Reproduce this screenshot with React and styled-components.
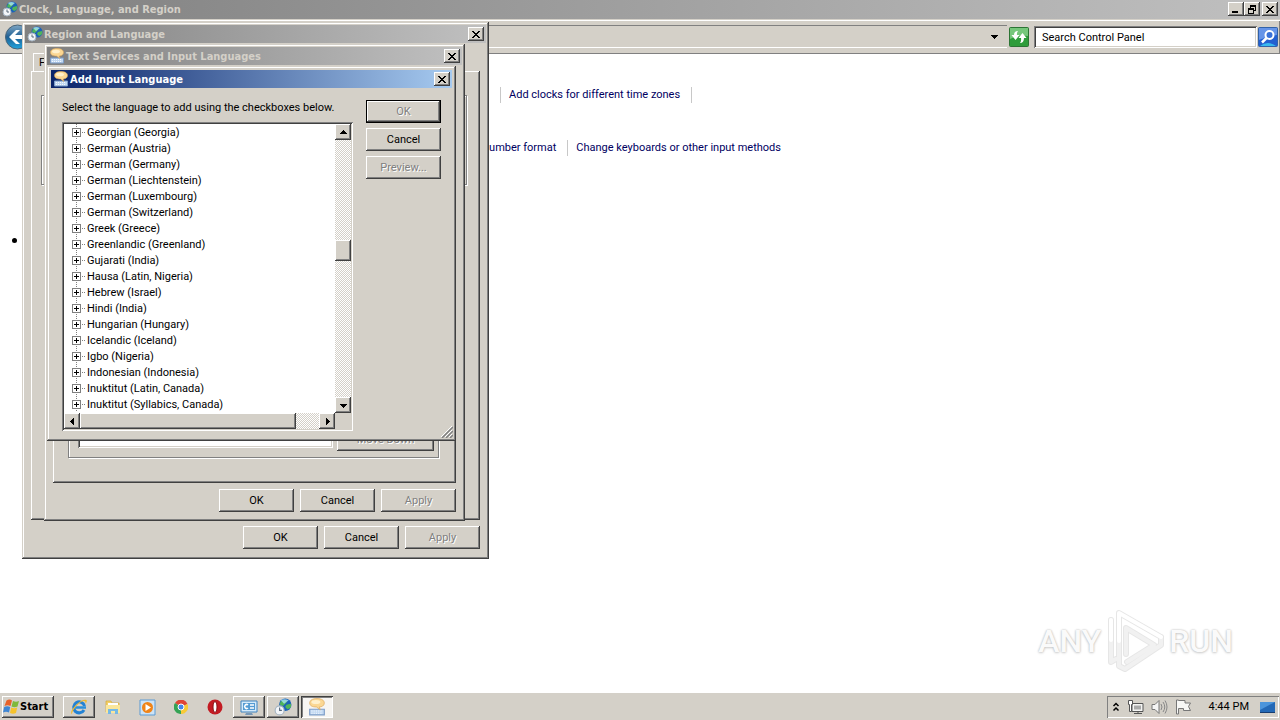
import React from "react";
import styled, { createGlobalStyle, css } from "styled-components";

const face = "#d4d0c8";
const raised = css`
  background: ${face};
  box-shadow: inset -1px -1px #404040, inset 1px 1px #fff, inset -2px -2px #808080;
`;
const sunken = css`
  box-shadow: inset 1px 1px #808080, inset -1px -1px #fff, inset 2px 2px #404040, inset -2px -2px ${face};
`;
const titleFont = css`
  font: 700 11px/18px "DejaVu Sans Condensed", "DejaVu Sans", sans-serif;
`;

const GlobalStyle = createGlobalStyle`
  * { box-sizing: border-box; }
  body { margin: 0; background: #fff; color: #000; font: 11px/16px Roboto, "Liberation Sans", sans-serif; }
  button, input { font: inherit; color: inherit; border: 0; border-radius: 0; padding: 0; margin: 0; }
  svg { display: block; flex: none; }
`;

const Desktop = styled.div`
  position: relative;
  display: flex;
  flex-direction: column;
  min-height: 100vh;
  overflow: hidden;
`;

/* Explorer window */
const MainTitle = styled.header`
  display: flex;
  align-items: center;
  height: 19px;
  padding: 0 2px 1px;
  color: ${face};
  background: linear-gradient(90deg, #808080, #c0c0c0);
  ${titleFont}
`;
const TitleText = styled.span`
  flex: 1;
  padding: 2px 0 0 1px;
  white-space: nowrap;
`;
const CaptionButton = styled.button`
  ${raised}
  display: grid;
  place-items: center;
  width: 16px;
  height: 14px;
  color: #000;
  margin-left: ${(p) => (p.$apart ? "2px" : "0")};
`;
const Toolbar = styled.div`
  display: flex;
  align-items: center;
  height: 35px;
  padding: 0 2px 0 3px;
  background: ${face};
  border-top: 1px solid ${face};
  border-bottom: 1px solid #808080;
  box-shadow: inset 0 1px #fff, inset -1px 0 #808080;
`;
const BackButton = styled.button`
  display: grid;
  place-items: center;
  background: none;
  width: 27px;
  height: 27px;
`;
const Address = styled.div`
  display: flex;
  flex: 1;
  align-items: center;
  justify-content: flex-end;
  height: 23px;
  margin: 0 2px 0 30px;
  border-top: 1px solid #808080;
  border-bottom: 1px solid #fff;
`;
const DropButton = styled.button`
  display: grid;
  place-items: center;
  width: 26px;
  height: 20px;
  background: none;
`;
const SquareButton = styled.button`
  display: grid;
  place-items: center;
  width: 20px;
  height: 20px;
  background: none;
`;
const SearchBox = styled.input`
  ${sunken}
  width: 223px;
  height: 22px;
  margin: 0 1px 0 5px;
  padding: 2px 8px 0;
  background: #fff;
  &::placeholder { color: #000; opacity: 1; }
`;
const Page = styled.main`
  display: flex;
  flex: 1;
  flex-direction: column;
  gap: 37px;
  padding-top: 33px;
`;
const LinkRow = styled.nav`
  display: flex;
  padding-left: ${(p) => p.$indent}px;
  white-space: nowrap;
`;
const PageLink = styled.a`
  padding: 0 11px 0 8px;
  color: #00005f;
  text-decoration: none;
  line-height: 16px;
  border-left: ${(p) => (p.$ruled ? "1px solid #c8c8c8" : "0")};
  border-right: ${(p) => (p.$last ? "0" : "1px solid #c8c8c8")};
`;
const Bullets = styled.ul`
  margin: 0;
  padding: 45px 0 0 12px;
  list-style: none;
`;
const Bullet = styled.li`
  width: 5px;
  height: 5px;
  border-radius: 3px;
  background: #000;
`;

/* Dialogs */
const Dialog = styled.section`
  position: absolute;
  background: ${face};
  box-shadow: inset -1px -1px #404040, inset 1px 1px ${face}, inset -2px -2px #808080, inset 2px 2px #fff;
`;
const RegionDialog = styled(Dialog)`
  left: 22px;
  top: 22px;
  width: 467px;
  padding: 3px 3px 10px;
`;
const ServicesDialog = styled(Dialog)`
  left: 44px;
  top: 44px;
  width: 421px;
  padding: 3px 3px 9px;
`;
const AddDialog = styled(Dialog)`
  left: 47px;
  top: 66px;
  width: 409px;
  padding: 4px 4px 0;
`;
const TitleBar = styled.header`
  display: flex;
  align-items: center;
  height: 18px;
  padding: 0 2px;
  color: ${(p) => (p.$active ? "#fff" : face)};
  background: ${(p) =>
    p.$active ? "linear-gradient(90deg, #0a246a, #a6caf0)" : "linear-gradient(90deg, #808080, #c0c0c0)"};
  ${titleFont}
`;
const DialogBody = styled.div`
  padding: 10px 6px 0;
`;
const Tab = styled.button`
  display: block;
  width: 56px;
  height: 18px;
  margin-left: 2px;
  padding-left: 5px;
  text-align: left;
  background: ${face};
  border-left: 1px solid #fff;
  border-top: 1px solid #fff;
`;
const TabPanel = styled.div`
  display: flex;
  flex-direction: column;
  ${raised}
`;
const RegionPanel = styled(TabPanel)`
  height: 449px;
  padding: 24px 13px 0 10px;
`;
const ServicesPanel = styled(TabPanel)`
  height: 408px;
  padding: 15px 17px 25px 15px;
`;
const GroupBox = styled.div`
  display: flex;
  align-items: flex-end;
  justify-content: space-between;
  height: ${(p) => (p.$short ? "90px" : "auto")};
  flex: ${(p) => (p.$short ? "none" : "1")};
  padding: 0 4px 6px 9px;
  border: 1px solid #808080;
  box-shadow: 1px 1px #fff, inset 1px 1px #fff;
`;
const ServiceList = styled.div`
  ${sunken}
  width: 255px;
  height: 180px;
  margin-bottom: 3px;
  background: #fff;
`;
const Actions = styled.footer`
  display: flex;
  justify-content: flex-end;
  gap: 6px;
  padding-top: 6px;
`;
const PushButton = styled.button`
  ${raised}
  width: ${(p) => (p.$wide ? "97px" : "75px")};
  height: 23px;
  line-height: 16px;
  ${(p) => p.$primary && css`
    box-shadow: inset 0 0 0 1px #000, inset -2px -2px #404040, inset 2px 2px #fff, inset -3px -3px #808080;
  `}
  &:disabled { color: #808080; text-shadow: 1px 1px #fff; }
`;
const AddBody = styled.div`
  display: flex;
  justify-content: space-between;
  padding: 12px 11px 10px 11px;
`;
const Prompt = styled.p`
  margin: 0 0 6px;
  line-height: 16px;
  white-space: nowrap;
`;
const ButtonColumn = styled.div`
  display: flex;
  flex-direction: column;
  gap: 5px;
`;
const ListFrame = styled.div`
  ${sunken}
  display: grid;
  grid-template: 289px 16px / 271px 16px;
  width: 291px;
  padding: 2px;
`;
const Tree = styled.ul`
  margin: 0;
  padding: 0 0 0 8px;
  list-style: none;
  overflow: hidden;
  background: #fff;
`;
const TreeItem = styled.li`
  display: flex;
  align-items: center;
  height: 16px;
  white-space: nowrap;
  background: repeating-linear-gradient(#808080 0 1px, #fff 1px 2px) 4px 0 / 1px 16px no-repeat;
`;
const TreeLabel = styled.span`
  padding-top: 2px;
`;
const Expander = styled.button`
  display: grid;
  place-items: center;
  width: 9px;
  height: 9px;
  border: 1px solid #808080;
  background: #fff;
`;
const Branch = styled.span`
  width: 5px;
  height: 1px;
  margin-right: 1px;
  background: repeating-linear-gradient(90deg, #fff 0 1px, #808080 1px 2px);
`;
const ScrollBar = styled.div`
  display: flex;
  flex-direction: ${(p) => (p.$vertical ? "column" : "row")};
  background: repeating-conic-gradient(#fff 0 25%, ${face} 0 50%) 0 0 / 2px 2px;
`;
const ScrollButton = styled.button`
  ${raised}
  display: grid;
  place-items: center;
  width: 16px;
  height: 16px;
`;
const Thumb = styled.div`
  ${raised}
  ${(p) => (p.$vertical ? "height: 21px; margin: 100px 0 auto;" : "width: 216px; margin-right: auto;")}
`;
const Corner = styled.div`
  background: ${face};
`;
const Grip = styled.span`
  position: absolute;
  right: 3px;
  bottom: 3px;
`;

/* Watermark */
const Watermark = styled.div`
  position: absolute;
  right: 47px;
  bottom: 47px;
  display: flex;
  align-items: center;
  gap: 4px;
  color: #fafafa;
  font: 500 32px/40px Roboto, sans-serif;
  text-shadow: 0 0 2px #b4b4b4, 0 1px 3px #d8d8d8;
`;

/* Taskbar */
const Taskbar = styled.footer`
  display: flex;
  align-items: center;
  gap: 2px;
  height: 28px;
  padding: 1px 1px 0 2px;
  background: ${face};
  border-top: 1px solid #fff;
`;
const StartButton = styled.button`
  ${raised}
  display: flex;
  align-items: center;
  width: 52px;
  height: 22px;
  margin-right: 7px;
  padding-left: 1px;
  ${titleFont}
`;
const TaskButton = styled.button`
  display: grid;
  place-items: center;
  width: 32px;
  height: 22px;
  background: none;
  ${(p) => p.$open && raised}
  ${(p) => p.$active && css`
    background: #f7f5f2;
    box-shadow: inset 1px 1px #404040, inset -1px -1px #fff, inset 2px 2px #808080;
  `}
`;
const Tray = styled.div`
  display: flex;
  align-items: center;
  gap: 7px;
  height: 22px;
  margin-left: auto;
  padding: 0 3px 0 5px;
  box-shadow: inset 1px 1px #808080, inset -1px -1px #fff;
`;
const Clock = styled.time`
  padding: 0 4px 0 10px;
  white-space: nowrap;
`;

const CloseGlyph = () => (
  <svg width="8" height="7" viewBox="0 0 8 7" shapeRendering="crispEdges">
    <path d="M0 0h2v1h1v1h2V1h1V0h2v1H7v1H6v1H5v1h1v1h1v1h1v1H6V6H5V5H3v1H2v1H0V6h1V5h1V4h1V3H2V2H1V1H0z" fill="#000" />
  </svg>
);
const MinGlyph = () => (
  <svg width="8" height="8"><path d="M0 6h6v2H0z" /></svg>
);
const RestoreGlyph = () => (
  <svg width="9" height="9" shapeRendering="crispEdges">
    <path d="M2 0h6v6H6V5h1V2H3v1H2zM0 3h6v6H0zM1 5v3h4V5z" fillRule="evenodd" />
  </svg>
);
const arrows = { up: "M4 2h1v1h1v1h1v1h1v1H1V5h1V4h1V3h1z", down: "M1 3h7v1H7v1H6v1H5v1H4V6H3V5H2V4H1z", left: "M6 1v7H5V7H4V6H3V5H2V4h1V3h1V2h1V1z", right: "M3 1v7h1V7h1V6h1V5h1V4H6V3H5V2H4V1z" };
const Arrow = ({ dir }) => (
  <svg width="9" height="9" shapeRendering="crispEdges"><path d={arrows[dir]} /></svg>
);
const GlobeIcon = ({ size = 16 }) => (
  <svg width={size} height={size} viewBox="0 0 16 16">
    <circle cx="10" cy="6" r="5.500" fill="#1c62b8" />
    <path d="M6 3q3-2 5-1 1 2-1 3L8 7 5 6zM11 6l4-1q1 4-3 5l-2-2z" fill="#4fb55a" />
    <path d="M6 2q3-2 7 0L9 5z" fill="#a9e3f4" opacity=".8" />
    <circle cx="5" cy="11" r="4" fill="#f2f5f9" stroke="#a5b4c2" />
    <path d="M5 8.500V11h2" fill="none" stroke="#5a6b7b" />
  </svg>
);
const KeyboardIcon = ({ size = 16 }) => (
  <svg width={size} height={size} viewBox="0 0 16 16">
    <path d="M1.500 10h13v5h-13z" fill="#c3d9f2" stroke="#7d9dc8" />
    <path d="M3 11.500h10M3 13.500h10" stroke="#f4f9ff" strokeDasharray="1 1" />
    <path d="M8 .5c4 0 6.500 1.500 6.500 4S12 8 10 8l1 2.500L7.500 8C4 8 1.500 7 1.500 4.500S4 .5 8 .5z" fill="#fbd793" stroke="#dba75a" strokeWidth=".6" />
    <ellipse cx="7" cy="3.500" rx="4" ry="1.800" fill="#fff0cc" />
  </svg>
);
const BackIcon = () => (
  <svg width="27" height="27" viewBox="0 0 27 27">
    <defs>
      <linearGradient id="back" x2="0" y2="1">
        <stop stopColor="#7fa6c4" /><stop offset=".5" stopColor="#1f5f93" /><stop offset="1" stopColor="#21a5df" />
      </linearGradient>
    </defs>
    <circle cx="14.500" cy="14" r="12" fill="url(#back)" stroke="#4a6478" />
    <path d="M6 14l7-7h4l-5 5h11v4H12l5 5h-4z" fill="#fff" />
  </svg>
);
const RefreshIcon = () => (
  <svg width="20" height="20" viewBox="0 0 20 20">
    <rect x=".5" y=".5" width="19" height="19" rx="1" fill="#2e9c3a" stroke="#2c7434" />
    <path d="M1 1h18v8Q10 7 1 12z" fill="#76c77b" />
    <path d="M9 4Q5 4 5 8H2.500l4 5 4-5H8Q7.500 6 9 4zM11 16q4 0 4-5h2.500l-4-5-4 5H12q.5 3-1 5z" fill="#fff" />
  </svg>
);
const SearchIcon = () => (
  <svg width="20" height="20" viewBox="0 0 20 20">
    <rect x=".5" y=".5" width="19" height="19" rx="1" fill="#235fd0" stroke="#3262a8" />
    <path d="M1 1h18v7Q10 9 1 13z" fill="#6594e8" />
    <path d="M2 19q8-6 16 0z" fill="#38b9ef" />
    <circle cx="11.500" cy="8" r="4" fill="#3971d8" stroke="#fff" strokeWidth="2" />
    <path d="M8.500 11L4 15.500" stroke="#fff" strokeWidth="2.500" />
  </svg>
);
const WindowsIcon = () => (
  <svg width="17" height="16" viewBox="0 0 17 16">
    <path d="M3.500 1.500q3-2 5.500 0L7.500 7q-3-1.500-6 0z" fill="#e8622a" />
    <path d="M10 2q3 1.500 6 0L14.500 7.500q-3 1.500-6 0z" fill="#7fb93a" />
    <path d="M1.200 8q3-1.500 6 0L6 13.500q-3-1.500-6 0z" fill="#3f86d4" />
    <path d="M8.200 8.500q3 1.500 6 0L13 14q-3 1.500-6 0z" fill="#f6c32c" />
  </svg>
);
const IeIcon = () => (
  <svg width="18" height="18" viewBox="0 0 18 18">
    <path d="M14 12a5.500 5.500 0 1 1 .5-4" fill="none" stroke="#2382d4" strokeWidth="3" />
    <path d="M5 9.500h11" stroke="#2a8fdc" strokeWidth="2.500" />
    <path d="M2 16.500Q-1 14 6 7q6-6 10.500-5 1 1-1 4 .5-3-1.500-3-3 0-7.500 5-5 6-4.500 8.500z" fill="#f0b92f" />
  </svg>
);
const FolderIcon = () => (
  <svg width="18" height="18" viewBox="0 0 18 18">
    <path d="M2 3h5l1 2h7v9H2z" fill="#f2cf67" stroke="#d6a93a" strokeWidth=".7" />
    <path d="M4 5h10v4H4z" fill="#fff" /><path d="M2 7h14v8H2z" fill="#fae69b" />
    <path d="M4 16v-5h10v5h-3v-3H7v3z" fill="#75b9e6" />
  </svg>
);
const MediaIcon = () => (
  <svg width="17" height="17" viewBox="0 0 17 17">
    <path d="M1 1h15v15H1z" fill="#cde3f6" stroke="#5b9bd5" />
    <circle cx="8.500" cy="8.500" r="5.500" fill="#f08418" />
    <path d="M6.500 5v7l5.500-3.500z" fill="#fff" />
  </svg>
);
const ChromeIcon = () => (
  <svg width="14" height="14" viewBox="1 1 14 14">
    <path d="M8 8L2 4a7 7 0 0 1 12.500 1z" fill="#e04535" />
    <path d="M8 8l6.500-3A7 7 0 0 1 8 15z" fill="#f8ca36" />
    <path d="M8 8v7A7 7 0 0 1 2 4z" fill="#35a355" />
    <circle cx="8" cy="8" r="3" fill="#4587ea" stroke="#fff" />
  </svg>
);
const OperaIcon = () => (
  <svg width="16" height="16" viewBox="0 0 16 16">
    <ellipse cx="8" cy="8" rx="7.500" ry="7.500" fill="#c31b22" />
    <ellipse cx="8" cy="8" rx="2" ry="5.500" fill="#fff" stroke="#871015" />
  </svg>
);
const PanelIcon = () => (
  <svg width="18" height="17" viewBox="0 0 18 17">
    <path d="M1 2h16v11H1z" fill="#d4eafa" stroke="#3e83bf" />
    <path d="M3 4h12v7H3z" fill="#539bd3" />
    <path d="M8 6a2 2 0 1 0 0 3M10 6h4M10 9h4" fill="none" stroke="#fff" strokeWidth="1.500" />
    <path d="M6 14h6l1 2H5z" fill="#7797b5" />
  </svg>
);
const ChevronIcon = () => (
  <svg width="8" height="10" viewBox="0 0 8 10"><path d="M1.500 4L4 1.500 6.500 4M1.500 8.500L4 6l2.500 2.500" fill="none" stroke="#000" strokeWidth="1.500" /></svg>
);
const NetworkIcon = () => (
  <svg width="17" height="16" viewBox="0 0 17 16">
    <path d="M5 4.500h11v8H5z" fill="#f5f5f3" stroke="#555" /><path d="M7 6.500h7v4H7z" fill="#aaa" />
    <path d="M7 14.500h8M11 12v2" stroke="#555" /><path d="M1.500 1.500h4v4h-1v7h-2v-7h-1z" fill="#fff" stroke="#555" />
  </svg>
);
const SpeakerIcon = () => (
  <svg width="17" height="16" viewBox="0 0 17 16">
    <path d="M1 5.500h3l4-4v13l-4-4H1z" fill="#f4f4f4" stroke="#777" />
    <path d="M10 5q2 3 0 6M12 3q3.500 5 0 10M14 1.500q4 6.500 0 13" fill="none" stroke="#888" />
  </svg>
);
const FlagIcon = () => (
  <svg width="17" height="16" viewBox="0 0 17 16">
    <path d="M1.500 1v14h2V9.500h5v2h7l-2-4 2-3.500H10V1.500H3.500V1z" fill="#f7f7f5" stroke="#777" />
  </svg>
);
const ScreenIcon = () => (
  <svg width="16" height="13" viewBox="0 0 16 13">
    <path d="M0 1h15v10H0z" fill="#2469b6" /><path d="M0 1h15L0 9z" fill="#4c95db" /><path d="M0 11h15v1H0z" fill="#173d70" />
  </svg>
);
const PlayLogo = () => (
  <svg width="60" height="64" viewBox="0 0 60 64">
    <g fill="none" strokeLinejoin="round" strokeLinecap="round">
      <path d="M6 11v42l5-3M14 28v29l6 3 36-24v-8M14 32V4l42 24M21 45V19l28 17-27 17" stroke="#d6d6d6" strokeWidth="6" opacity=".6" />
      <path d="M6 11v42l5-3M14 28v29l6 3 36-24v-8M21 45V19l28 17-27 17" stroke="#f1f1f1" strokeWidth="4" />
      <path d="M6 11v20M14 32V4l42 24" stroke="#fff" strokeWidth="4" />
    </g>
  </svg>
);

const languages = [
  "Georgian (Georgia)", "German (Austria)", "German (Germany)", "German (Liechtenstein)", "German (Luxembourg)",
  "German (Switzerland)", "Greek (Greece)", "Greenlandic (Greenland)", "Gujarati (India)", "Hausa (Latin, Nigeria)",
  "Hebrew (Israel)", "Hindi (India)", "Hungarian (Hungary)", "Icelandic (Iceland)", "Igbo (Nigeria)",
  "Indonesian (Indonesia)", "Inuktitut (Latin, Canada)", "Inuktitut (Syllabics, Canada)",
];

const TitleRow = ({ icon, title, active }) => (
  <TitleBar $active={active}>
    {icon}
    <TitleText>{title}</TitleText>
    <CaptionButton aria-label="Close"><CloseGlyph /></CaptionButton>
  </TitleBar>
);
const SheetActions = () => (
  <Actions>
    <PushButton>OK</PushButton>
    <PushButton>Cancel</PushButton>
    <PushButton disabled>Apply</PushButton>
  </Actions>
);

export default function App() {
  return (
    <Desktop>
      <GlobalStyle />
      <MainTitle>
        <GlobeIcon />
        <TitleText>Clock, Language, and Region</TitleText>
        <CaptionButton aria-label="Minimize"><MinGlyph /></CaptionButton>
        <CaptionButton aria-label="Restore"><RestoreGlyph /></CaptionButton>
        <CaptionButton aria-label="Close" $apart><CloseGlyph /></CaptionButton>
      </MainTitle>
      <Toolbar>
        <BackButton aria-label="Back"><BackIcon /></BackButton>
        <Address>
          <DropButton aria-label="Previous locations"><Arrow dir="down" /></DropButton>
        </Address>
        <SquareButton aria-label="Refresh"><RefreshIcon /></SquareButton>
        <SearchBox aria-label="Search Control Panel" placeholder="Search Control Panel" />
        <SquareButton aria-label="Search"><SearchIcon /></SquareButton>
      </Toolbar>
      <Page>
        <LinkRow $indent={500}>
          <PageLink href="#clocks" $ruled>Add clocks for different time zones</PageLink>
        </LinkRow>
        <LinkRow $indent={475}>
          <PageLink href="#format">number format</PageLink>
          <PageLink href="#keyboards" $last>Change keyboards or other input methods</PageLink>
        </LinkRow>
        <Bullets><Bullet /></Bullets>
      </Page>

      <RegionDialog aria-label="Region and Language">
        <TitleRow icon={<GlobeIcon />} title="Region and Language" />
        <DialogBody>
          <Tab aria-label="Formats">F</Tab>
          <RegionPanel><GroupBox $short /></RegionPanel>
          <SheetActions />
        </DialogBody>
      </RegionDialog>

      <ServicesDialog aria-label="Text Services and Input Languages">
        <TitleRow icon={<KeyboardIcon />} title="Text Services and Input Languages" />
        <DialogBody>
          <ServicesPanel>
            <GroupBox>
              <ServiceList />
              <PushButton disabled $wide>Move Down</PushButton>
            </GroupBox>
          </ServicesPanel>
          <SheetActions />
        </DialogBody>
      </ServicesDialog>

      <AddDialog aria-label="Add Input Language">
        <TitleRow icon={<KeyboardIcon />} title="Add Input Language" active />
        <AddBody>
          <div>
            <Prompt>Select the language to add using the checkboxes below.</Prompt>
            <ListFrame>
              <Tree>
                {languages.map((name) => (
                  <TreeItem key={name}>
                    <Expander aria-label={`Expand ${name}`}>
                      <svg width="5" height="5"><path d="M2 0h1v2h2v1H3v2H2V3H0V2h2z" /></svg>
                    </Expander>
                    <Branch />
                    <TreeLabel>{name}</TreeLabel>
                  </TreeItem>
                ))}
              </Tree>
              <ScrollBar $vertical>
                <ScrollButton aria-label="Scroll up"><Arrow dir="up" /></ScrollButton>
                <Thumb $vertical />
                <ScrollButton aria-label="Scroll down"><Arrow dir="down" /></ScrollButton>
              </ScrollBar>
              <ScrollBar>
                <ScrollButton aria-label="Scroll left"><Arrow dir="left" /></ScrollButton>
                <Thumb />
                <ScrollButton aria-label="Scroll right"><Arrow dir="right" /></ScrollButton>
              </ScrollBar>
              <Corner />
            </ListFrame>
          </div>
          <ButtonColumn>
            <PushButton disabled $primary>OK</PushButton>
            <PushButton>Cancel</PushButton>
            <PushButton disabled>Preview...</PushButton>
          </ButtonColumn>
        </AddBody>
        <Grip>
          <svg width="12" height="12" viewBox="0 0 12 12">
            <path d="M0 11L11 0M4 11l7-7M8 11l3-3" stroke="#fff" />
            <path d="M1 12L12 1M5 12l7-7M9 12l3-3" stroke="#808080" strokeWidth="1.500" />
          </svg>
        </Grip>
      </AddDialog>

      <Watermark>
        <span>ANY</span>
        <PlayLogo />
        <span>RUN</span>
      </Watermark>

      <Taskbar>
        <StartButton><WindowsIcon />Start</StartButton>
        <TaskButton $open aria-label="Internet Explorer"><IeIcon /></TaskButton>
        <TaskButton aria-label="Windows Explorer"><FolderIcon /></TaskButton>
        <TaskButton aria-label="Media Player"><MediaIcon /></TaskButton>
        <TaskButton aria-label="Chrome"><ChromeIcon /></TaskButton>
        <TaskButton aria-label="Opera"><OperaIcon /></TaskButton>
        <TaskButton $open aria-label="Control Panel"><PanelIcon /></TaskButton>
        <TaskButton $open aria-label="Region and Language"><GlobeIcon size={18} /></TaskButton>
        <TaskButton $active aria-label="Input Languages"><KeyboardIcon size={18} /></TaskButton>
        <Tray>
          <ChevronIcon />
          <NetworkIcon />
          <SpeakerIcon />
          <FlagIcon />
          <Clock>4:44 PM</Clock>
          <ScreenIcon />
        </Tray>
      </Taskbar>
    </Desktop>
  );
}
